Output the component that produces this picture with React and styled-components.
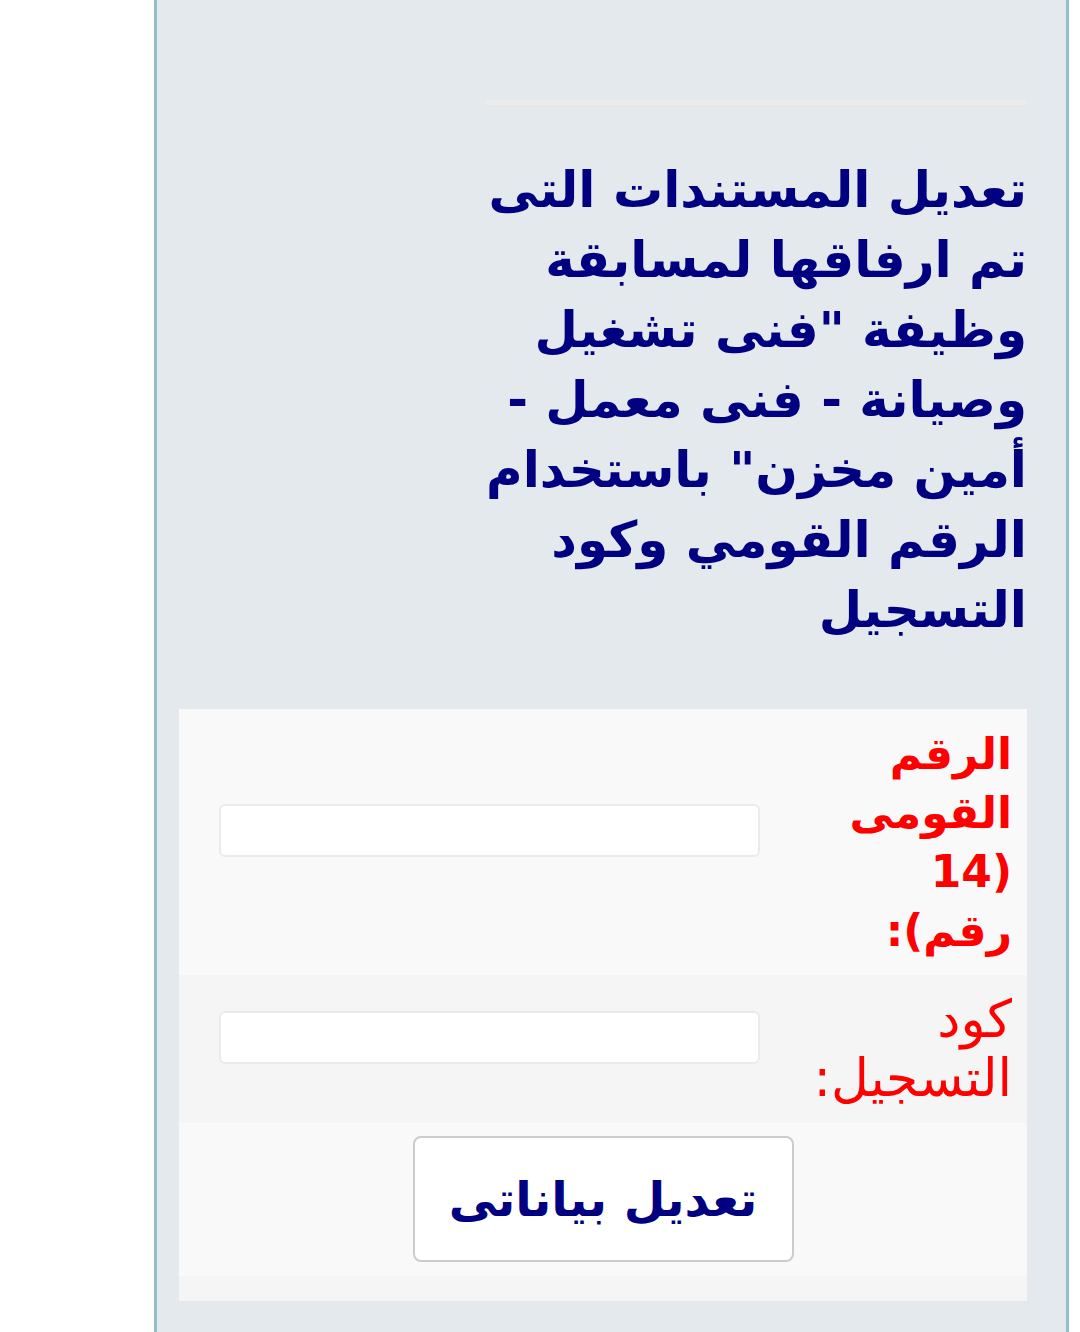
import styled, { createGlobalStyle } from 'styled-components';

const GlobalStyle = createGlobalStyle`
  html, body {
    margin: 0;
    padding: 0;
    background: #ffffff;
  }
  body {
    font-family: 'DejaVu Sans', 'Noto Sans', sans-serif;
  }
`;

export default function App() {
  return (
    <>
      <GlobalStyle />
      <Page>
        <Panel dir="rtl">
          <Header>
            <Rule />
            <Title>
              تعديل المستندات التى تم ارفاقها لمسابقة وظيفة "فنى تشغيل وصيانة - فنى معمل - أمين مخزن" باستخدام الرقم القومي وكود التسجيل
            </Title>
          </Header>
          <FormTable>
            <tbody>
              <Row>
                <LabelCell $bold>الرقم القومى (14 رقم):</LabelCell>
                <InputCell>
                  <TextInput type="text" />
                </InputCell>
              </Row>
              <Row $alt>
                <LabelCell>كود التسجيل:</LabelCell>
                <InputCell>
                  <TextInput type="text" />
                </InputCell>
              </Row>
              <Row>
                <ButtonCell colSpan={2}>
                  <SubmitButton type="button">تعديل بياناتى</SubmitButton>
                </ButtonCell>
              </Row>
              <Row $alt>
                <SpacerCell colSpan={2} />
              </Row>
            </tbody>
          </FormTable>
        </Panel>
      </Page>
    </>
  );
}

const Page = styled.div`
  display: flex;
  min-height: 1332px;
  padding-left: 154px;
  padding-right: 11px;
`;

const Panel = styled.div`
  flex: 1;
  display: flex;
  flex-direction: column;
  align-items: stretch;
  background: #e4e9ee;
  border-left: 3px solid #93bfcd;
  border-right: 3px solid #93bfcd;
  padding: 100px 39px 0 22px;
`;

const Header = styled.div`
  width: 542px;
  display: flex;
  flex-direction: column;
  gap: 50px;
`;

const Rule = styled.div`
  height: 5px;
  background: #ececec;
`;

const Title = styled.h1`
  margin: 0;
  color: #000080;
  font-size: 50px;
  line-height: 70px;
  font-weight: bold;
  text-align: right;
`;

const FormTable = styled.table`
  margin-top: 64px;
  width: 100%;
  border-collapse: collapse;
  border-spacing: 0;
`;

const Row = styled.tr`
  background: ${(p) => (p.$alt ? '#f5f5f5' : '#f9f9f9')};
`;

const LabelCell = styled.td`
  width: 222px;
  padding: 15px;
  color: #ff0000;
  font-size: ${(p) => (p.$bold ? '44px' : '52px')};
  font-weight: ${(p) => (p.$bold ? 'bold' : 'normal')};
  line-height: 59px;
  text-align: right;
  vertical-align: middle;
`;

const InputCell = styled.td`
  padding: 15px 15px 39px;
  vertical-align: middle;
`;

const TextInput = styled.input`
  display: block;
  width: 541px;
  height: 53px;
  box-sizing: border-box;
  background: #ffffff;
  border: 2px solid #ebebeb;
  border-radius: 6px;
  outline: none;
`;

const ButtonCell = styled.td`
  padding: 13px 15px 14px;
  text-align: center;
`;

const SubmitButton = styled.button`
  width: 381px;
  height: 126px;
  background: #ffffff;
  border: 2px solid #cccccc;
  border-radius: 8px;
  color: #000080;
  font-family: inherit;
  font-size: 48px;
  font-weight: bold;
  cursor: pointer;
`;

const SpacerCell = styled.td`
  height: 25px;
  padding: 0;
`;
